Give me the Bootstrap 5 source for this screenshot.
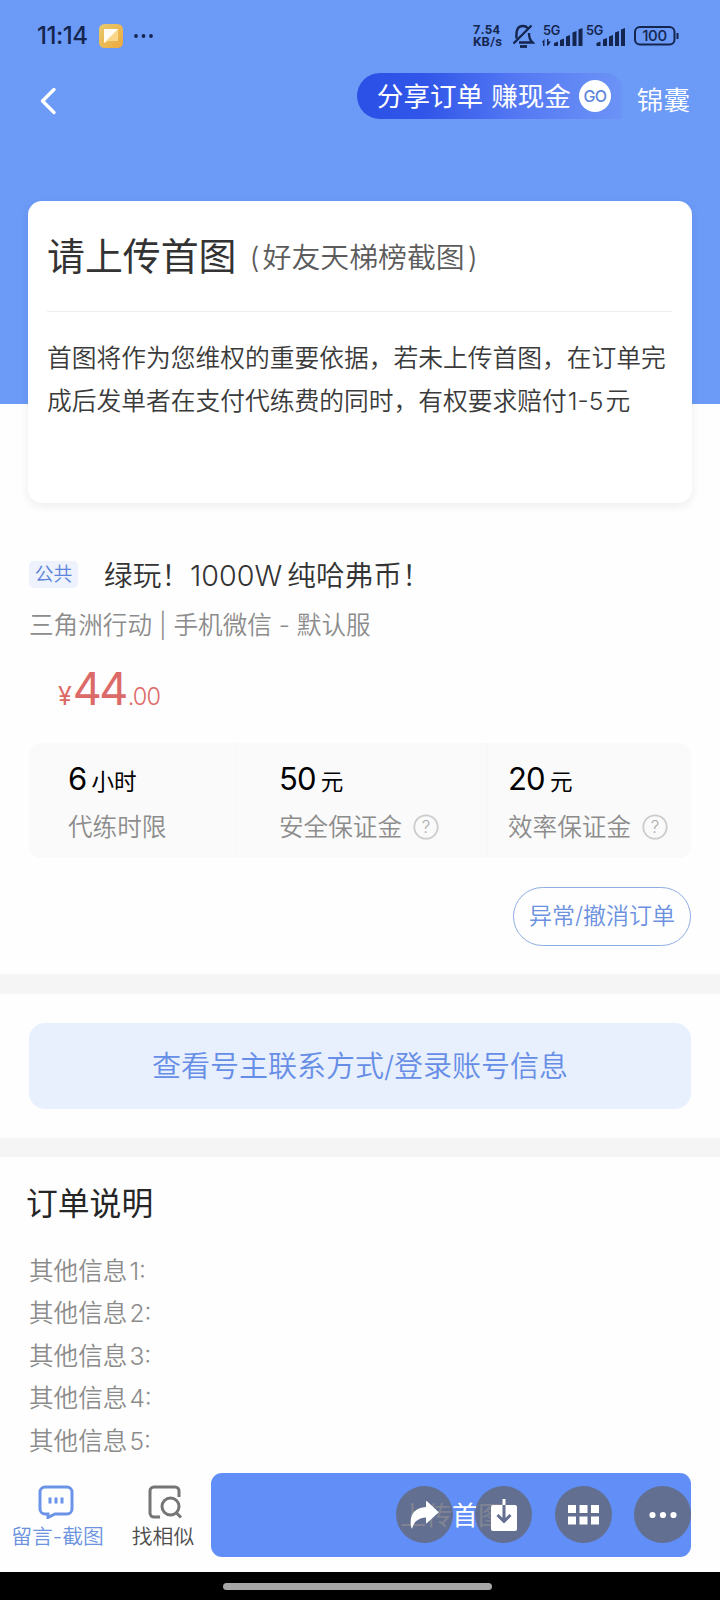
<!DOCTYPE html>
<html lang="zh-CN">
<head>
<meta charset="utf-8">
<meta name="viewport" content="width=device-width, initial-scale=1">
<title>订单详情</title>
<link href="https://cdn.jsdelivr.net/npm/bootstrap@5.3.0/dist/css/bootstrap.min.css" rel="stylesheet">
<style>
  body{font-family:Inter,"Noto Sans CJK SC",sans-serif;font-weight:350;color:#3a3a3a;background:#fefefe;width:720px;height:1600px;overflow:hidden;line-height:1}
  svg{display:block;flex:none}
  .text-nowrap>*{flex:none}
  .hero{background:#6c9af7;height:404px}
  .statusbar{height:70px;padding:1px 41px 0 37px;color:#14264f}
  .clock{font-size:24px;font-weight:500;width:62px;letter-spacing:-.5px}
  .speed{font-family:Roboto,sans-serif;font-size:13px;line-height:11px;font-weight:700;width:38px}
  .speed div{height:11.500px;letter-spacing:.3px}
  .topbar{height:60px;padding:3px 30px 0 40px}
  .promo{width:265px;height:46px;padding-left:20px;border-radius:23px 16px 0 23px;background:linear-gradient(90deg,#2b50e6 0%,#3055e8 25%,#5478f3 60%,#6c93f6 100%);font-size:26.6px;font-weight:400;color:#fff}
  .go{width:32px;height:32px;background:#fff;color:#5f86dc;font-size:16px;font-weight:500;letter-spacing:-.6px}
  .kit{font-size:26.6px;color:#fff;margin-left:15px;padding-top:14px}
  .notice{margin:-203px 28px 0;height:302px;border:0;border-radius:14px;padding:0 20px 0 19px;box-shadow:0 3px 10px rgba(0,0,0,.07)}
  .notice-head{height:111px;border-bottom:1px solid #eee;font-size:37.9px;padding-top:1px;font-weight:400;color:#333}
  .notice-sub{font-size:28.9px;color:#5c5c5c;font-weight:350}
  .notice-body{margin:25px 0 0;font-size:24.75px;line-height:42.5px;color:#3a3a3a}
  .order{padding:43px 29px 0;height:471px}
  .tag{width:49px;height:27px;border-radius:5px;background:#edf2fd;color:#5c84d8;font-size:18.8px;padding-top:2px}
  .order-title{font-size:28.7px;margin-left:26px;color:#333;padding-top:4px}
  .muted{color:#8c8c8c;font-size:24.6px}
  .price{color:#dc6a68;height:58px;padding-left:29px;margin-top:19px}
  .price b{font-size:45px;font-weight:400;letter-spacing:-2.600px;margin:0 2px 0 1px}
  .yen{font-size:25px;font-weight:400}
  .cents{font-size:23.5px;letter-spacing:-.9px}
  .stats{height:115px;border-radius:12px;background:#fafafa;margin-top:19px}
  .stats>div{padding-top:20px}
  .stats .s1{width:206px;padding-left:39px}
  .stats .s2{width:251px;padding-left:43px;border-left:1px solid #f7f7f7}
  .stats .s3{padding-left:21px;border-left:1px solid #f5f5f5}
  .amount{height:40px;color:#000;font-size:22.6px;font-weight:400}
  .amount b{font-size:31px;font-weight:400;margin-right:5px;letter-spacing:-.8px}
  .label-row{height:48px}
  .cancel{width:178px;height:59px;border:1px solid #8eaee3;color:#6b91e0;font-size:23px;font-weight:350;margin-top:29px;padding:0}
  .band{height:19px;background:#f5f5f5}
  .contact{margin:29px 29px;height:86px;width:662px;border-radius:16px;background:#e8effd;color:#668ee6;font-size:29px;font-weight:350;border:0;padding-top:8px}
  .desc{padding:1px 29px 0;height:316px}
  .desc h2{font-size:31.8px;font-weight:400;color:#262626;margin:0 0 0 -3px;height:92px;padding-top:1px}
  .desc li{height:42.5px;gap:2px}
  .bottombar{height:99px}
  .tool{font-size:20.8px;height:99px;padding-top:12px}
  .upload{width:480px;height:84px;border-radius:11px;background:#618ff7;color:#fff;font-size:26px;font-weight:400;border:0;letter-spacing:-.1px;padding-left:14px}
  .floaters{position:absolute;right:29px;top:13px;gap:22.5px}
  .floaters span{width:57px;height:57px;background:rgba(99,104,122,.82)}
  .homebar{height:28px;background:#000}
  .homebar div{width:269px;height:7px;background:#a6a6a6;margin-right:5px}
</style>
</head>
<body class="d-flex flex-column text-nowrap">
<header class="hero">
  <div class="statusbar d-flex align-items-center">
    <span class="clock">11:14</span>
    <svg width="24" height="24" viewBox="0 0 24 24"><defs><linearGradient id="g" x2="1" y2="1"><stop stop-color="#e5ca70"/><stop offset="1" stop-color="#efa93c"/></linearGradient></defs><rect width="24" height="24" rx="5.5" fill="url(#g)"/><path d="M5 5h14v12H10l-5 2z" fill="#f8d68a"/><path d="M5 5h14L5 19z" fill="#fffdf6"/></svg>
    <svg class="ms-2 me-auto" width="24" height="6"><g fill="#14264f"><circle cx="5" cy="3" r="1.900"/><circle cx="12.500" cy="3" r="1.900"/><circle cx="20" cy="3" r="1.900"/></g></svg>
    <div class="speed"><div>7.54</div><div>KB/s</div></div>
    <svg width="24" height="26" viewBox="0 0 24 26" fill="none" stroke="#14264f" stroke-width="2.4"><path d="M2.500 20.500L20.500 2.500M5.500 15.500C5 8 6 3 12 3c2 0 3.500.7 4.500 2M18 10c0 5 .5 7 3.500 9.500H8"/><path d="M9 23.500h7" stroke-width="2.800"/></svg>
    <svg style="margin-left:7px" width="84" height="24" fill="#14264f"><text x="1" y="11" font-size="12.800" font-weight="600" letter-spacing="-.3">5G</text><text x="44" y="11" font-size="12.800" font-weight="600" letter-spacing="-.3">5G</text><path d="M0 18l2.500-3v7H1v-3zM5 22v-7h1.500v2.500H9L6.500 21zM12 22v-3l4-1.500V22zM18 22v-6l4-1.500V22zM24 22v-9.500l4-1.500v11zM30.500 22V8.500l4-1.500v15zM36.500 22V5.500l4-1.500v18zM54.500 22v-3l4-1.500V22zM61 22v-6.500l4-1.500v8zM67 22V12.500l4-1.500v11zM73 22V8.500L77 7v15zM79 22V5.500L83 4v18z"/></svg>
    <svg style="margin-left:8px" width="45" height="20"><rect x="1" y="1" width="39.500" height="17.500" rx="5" fill="none" stroke="#14264f" stroke-width="2"/><path d="M42.500 7h2v6h-2z" fill="#14264f"/><text x="20.500" y="15.200" text-anchor="middle" font-size="15" font-weight="500" letter-spacing="-.3" fill="#14264f">100</text></svg>
  </div>
  <nav class="topbar d-flex align-items-start">
    <svg style="margin-top:14px" class="me-auto" width="17" height="29" fill="none" stroke="#fff" stroke-width="3.400" stroke-linecap="round" stroke-linejoin="round"><path d="M14 2.500L2.500 14 14 25.500"/></svg>
    <div class="promo d-flex align-items-center"><span>分享订单</span><span class="ms-2">赚现金</span><span class="go rounded-circle d-flex align-items-center justify-content-center ms-2">GO</span></div>
    <span class="kit">锦囊</span>
  </nav>
</header>
<section class="card notice">
  <div class="notice-head d-flex align-items-center"><span>请上传首图</span><span class="notice-sub d-flex" style="padding:3px 0 0 13px"><span>(</span><span style="padding:0 3px">好友天梯榜截图</span><span>)</span></span></div>
  <p class="notice-body">首图将作为您维权的重要依据，若未上传首图，在订单完<br>成后发单者在支付代练费的同时，有权要求赔付<span style="margin:0 2px 0 1px">1-5</span>元</p>
</section>
<section class="order">
  <div class="d-flex align-items-center" style="height:56px;margin-bottom:-1px"><span class="tag d-flex align-items-center justify-content-center">公共</span><span class="order-title">绿玩！<span style="margin-right:5px">1000W</span>纯哈弗币！</span></div>
  <div class="muted d-flex align-items-center" style="height:46px;padding-top:3px"><span>三角洲行动 | 手机微信 - 默认服</span></div>
  <div class="price d-flex align-items-baseline"><span class="yen">¥</span><b>44</b><span class="cents">.00</span></div>
  <div class="stats d-flex">
    <div class="s1"><div class="amount d-flex align-items-baseline"><b>6</b>小时</div><div class="label-row muted d-flex align-items-center">代练时限</div></div>
    <div class="s2"><div class="amount d-flex align-items-baseline"><b>50</b>元</div><div class="label-row muted d-flex align-items-center">安全保证金<svg style="margin-left:11px" width="26" height="26"><circle cx="13" cy="13" r="11.700" fill="none" stroke="#ccc" stroke-width="1.800"/><text x="13" y="19" text-anchor="middle" font-size="17" fill="#aaa">?</text></svg></div></div>
    <div class="s3"><div class="amount d-flex align-items-baseline"><b>20</b>元</div><div class="label-row muted d-flex align-items-center">效率保证金<svg style="margin-left:11px" width="26" height="26"><circle cx="13" cy="13" r="11.700" fill="none" stroke="#ccc" stroke-width="1.800"/><text x="13" y="19" text-anchor="middle" font-size="17" fill="#aaa">?</text></svg></div></div>
  </div>
  <div class="d-flex justify-content-end"><button class="btn rounded-pill cancel">异常/撤消订单</button></div>
</section>
<div class="band" style="height:20px"></div>
<button class="btn contact">查看号主联系方式/登录账号信息</button>
<div class="band"></div>
<section class="desc">
  <h2 class="d-flex align-items-center">订单说明</h2>
  <ul class="list-unstyled m-0 muted">
    <li class="d-flex align-items-center"><span>其他信息</span><span>1:</span></li>
    <li class="d-flex align-items-center"><span>其他信息</span><span>2:</span></li>
    <li class="d-flex align-items-center"><span>其他信息</span><span>3:</span></li>
    <li class="d-flex align-items-center"><span>其他信息</span><span>4:</span></li>
    <li class="d-flex align-items-center"><span>其他信息</span><span>5:</span></li>
  </ul>
</section>
<footer class="bottombar d-flex position-relative">
  <div class="tool d-flex flex-column align-items-center" style="width:115px;color:#6b93e0">
    <svg class="me-1" width="36" height="34" fill="none" stroke="#6b93e8" stroke-width="3"><path d="M7 2h22a5 5 0 0 1 5 5v17a5 5 0 0 1-5 5H17l-7 3.500V29H7a5 5 0 0 1-5-5V7a5 5 0 0 1 5-5z"/><path d="M12 12.500v6M18 12.500v6M24 12.500v6"/></svg>
    <span style="margin-top:8px">留言-截图</span>
  </div>
  <div class="tool d-flex flex-column align-items-center" style="width:96px;color:#4c4c4c">
    <svg class="ms-1" width="36" height="34" fill="none" stroke="#757575" stroke-width="3"><path d="M32 12V6a4 4 0 0 0-4-4H7a4 4 0 0 0-4 4v22a4 4 0 0 0 4 4h6"/><circle cx="23.500" cy="21.500" r="8.500"/><path d="M29 27.500l5 5"/></svg>
    <span style="margin-top:8px">找相似</span>
  </div>
  <button class="btn upload">上传首图</button>
  <div class="floaters d-flex">
    <span class="rounded-circle d-flex align-items-center justify-content-center"><svg width="30" height="30" fill="#fff"><path d="M17 1.500q0-1 1-.2L29 11.500q1 .8 0 1.600L18 23q-1 .8-1-.2v-5.300C9 18 5 22 3.500 27.500q-.8 2-1.200 0C-.5 15 6 7.500 17 7z"/></svg></span>
    <span class="rounded-circle d-flex align-items-center justify-content-center"><svg width="28" height="34" fill="none"><rect x="1" y="7" width="26" height="26" rx="2" fill="#fff"/><path d="M14 1v6" stroke="#fff" stroke-width="3"/><path d="M14 7v16M7.500 17l6.500 6.500 6.500-6.500" stroke="#636f8f" stroke-width="3"/></svg></span>
    <span class="rounded-circle d-flex align-items-center justify-content-center"><svg width="31" height="20" fill="#fff"><path d="M0 0h8v8H0zM11.500 0h8v8h-8zM23 0h8v8h-8zM0 11.500h8v8H0zM11.500 11.500h8v8h-8zM23 11.500h8v8h-8z"/></svg></span>
    <span class="rounded-circle d-flex align-items-center justify-content-center"><svg width="28" height="8" fill="#fff"><circle cx="3.500" cy="4" r="3.100"/><circle cx="14" cy="4" r="3.100"/><circle cx="24.500" cy="4" r="3.100"/></svg></span>
  </div>
</footer>
<div class="homebar d-flex align-items-center justify-content-center"><div class="rounded-pill"></div></div>
<script src="https://cdn.jsdelivr.net/npm/bootstrap@5.3.0/dist/js/bootstrap.bundle.min.js"></script>
</body>
</html>
